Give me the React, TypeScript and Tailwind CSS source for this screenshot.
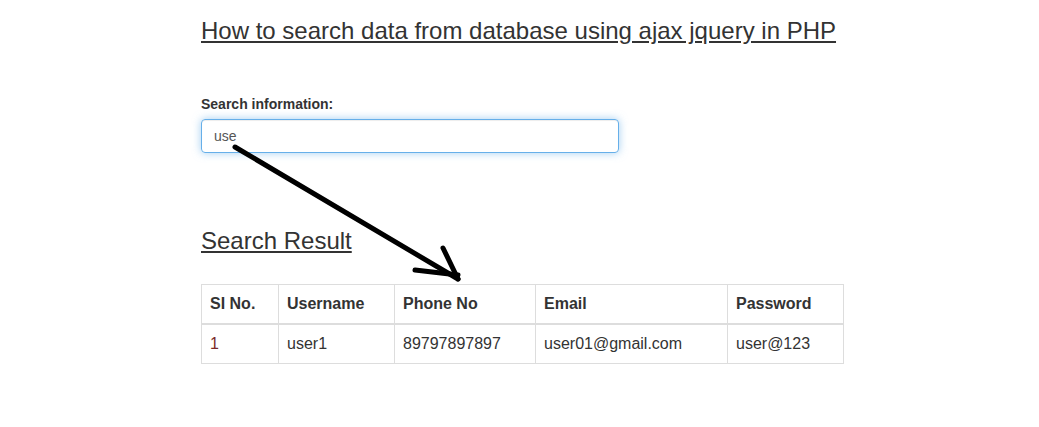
import React from "react";

const rows = [
  { id: "1", username: "user1", phone: "89797897897", email: "user01@gmail.com", password: "user@123" },
];

const App = () => {
  return (
    <div className="relative min-h-[427px] bg-white text-[#333] font-['Liberation_Sans',Arial,sans-serif]">
      <div className="ml-[201px] w-[643px] pt-[18px]">
        <h3 className="text-[24px] leading-[26.4px] underline">
          How to search data from database using ajax jquery in PHP
        </h3>

        <form className="mt-[50px]">
          <label className="block text-[14px] leading-[20px] font-bold mb-[5px]">Search information:</label>
          <input
            type="text"
            defaultValue="use"
            className="block w-[418px] h-[34px] px-[12px] text-[14px] text-[#555] rounded-[4px] border border-[#66afe9] outline-none shadow-[inset_0_1px_1px_rgba(0,0,0,0.075),0_0_8px_rgba(102,175,233,0.6)]"
          />
        </form>

        <h3 className="mt-[75px] text-[24px] leading-[26.4px] underline">Search Result</h3>

        <table className="mt-[29px] w-[643px] border-collapse text-[16px] leading-[22px]">
          <thead>
            <tr className="text-left">
              <th className="w-[77px] border border-[#ddd] border-b-2 px-[8px] py-[8px] font-bold">SI No.</th>
              <th className="w-[116px] border border-[#ddd] border-b-2 px-[8px] py-[8px] font-bold">Username</th>
              <th className="w-[141px] border border-[#ddd] border-b-2 px-[8px] py-[8px] font-bold">Phone No</th>
              <th className="w-[192px] border border-[#ddd] border-b-2 px-[8px] py-[8px] font-bold">Email</th>
              <th className="border border-[#ddd] border-b-2 px-[8px] py-[8px] font-bold">Password</th>
            </tr>
          </thead>
          <tbody>
            {rows.map((r) => (
              <tr key={r.id}>
                <td className="border border-[#ddd] px-[8px] py-[8px] text-[#7a2a2a]">{r.id}</td>
                <td className="border border-[#ddd] px-[8px] py-[8px]">{r.username}</td>
                <td className="border border-[#ddd] px-[8px] py-[8px]">{r.phone}</td>
                <td className="border border-[#ddd] px-[8px] py-[8px]">{r.email}</td>
                <td className="border border-[#ddd] px-[8px] py-[8px]">{r.password}</td>
              </tr>
            ))}
          </tbody>
        </table>
      </div>

      {/* hand drawn arrow over the page */}
      <svg className="absolute left-0 top-0 pointer-events-none" width="1039" height="427">
        <g stroke="#000" strokeWidth="5" strokeLinecap="round" fill="none">
          <line x1="235" y1="147" x2="458" y2="279" />
          <line x1="415" y1="270" x2="458" y2="275" />
          <line x1="443" y1="248" x2="458" y2="279" />
        </g>
      </svg>
    </div>
  );
};

export default App;
